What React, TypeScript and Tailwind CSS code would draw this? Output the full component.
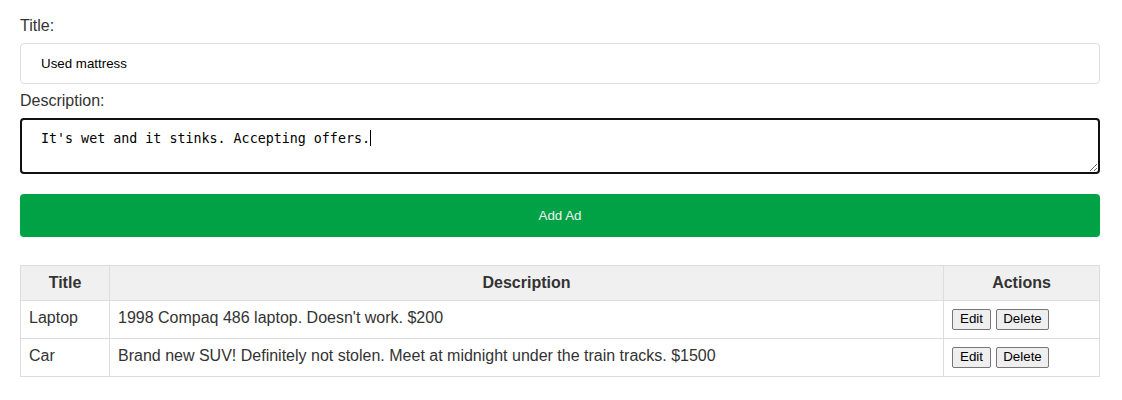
import React from "react";

const rows = [
  { title: "Laptop", desc: "1998 Compaq 486 laptop. Doesn't work. $200" },
  { title: "Car", desc: "Brand new SUV! Definitely not stolen. Meet at midnight under the train tracks. $1500" },
];

export default function App() {
  return (
    <div
      className="bg-white text-[#333] px-[20px] pt-[17px] w-[1122px] h-[400px]"
      style={{ fontFamily: '"Liberation Sans", Arial, sans-serif' }}
    >
      <div className="w-[1080px]">
        <label className="block text-[16px] leading-[18px] mb-[8px]">Title:</label>
        <input
          type="text"
          defaultValue="Used mattress"
          className="block w-full h-[41px] border border-[#ddd] rounded-[4px] px-[20px] text-[13.33px] text-black outline-none"
          style={{ fontFamily: '"Liberation Sans", Arial, sans-serif' }}
        />
        <label className="block text-[16px] leading-[18px] mt-[8px] mb-[8px]">Description:</label>
        <div className="relative">
          <textarea
            readOnly
            defaultValue="It's wet and it stinks. Accepting offers."
            className="block w-full h-[56px] border-2 border-[#101010] rounded-[4px] px-[19px] pt-[11px] pb-[7px] text-[13.33px] leading-[16px] text-black outline-none caret-transparent"
            style={{ fontFamily: '"DejaVu Sans Mono", monospace' }}
          />
          <span className="absolute left-[350px] top-[12px] w-px h-[16px] bg-black" />
        </div>
        <button className="block w-full h-[43px] mt-[20px] rounded-[4px] bg-[#00a246] text-[#f0f0f0] text-[13.33px]">
          Add Ad
        </button>
        <table className="mt-[28px] w-full border-collapse text-[16px]">
          <thead>
            <tr className="bg-[#f0f0f0]">
              <th className="border border-[#ddd] w-[89px] h-[35px] font-bold">Title</th>
              <th className="border border-[#ddd] w-[834px] h-[35px] font-bold">Description</th>
              <th className="border border-[#ddd] h-[35px] font-bold">Actions</th>
            </tr>
          </thead>
          <tbody>
            {rows.map((r) => (
              <tr key={r.title}>
                <td className="border border-[#ddd] h-[38px] px-[8px] pb-[3px] text-left">{r.title}</td>
                <td className="border border-[#ddd] h-[38px] px-[8px] pb-[3px] text-left">{r.desc}</td>
                <td className="border border-[#ddd] h-[38px] px-[8px] pb-[1px]">
                  <div className="flex gap-[5px]">
                    <button className="w-[39px] h-[21px] border border-[#767676] rounded-[2px] bg-[#efefef] text-black text-[13.33px] leading-[16px]">
                      Edit
                    </button>
                    <button className="w-[53px] h-[21px] border border-[#767676] rounded-[2px] bg-[#efefef] text-black text-[13.33px] leading-[16px]">
                      Delete
                    </button>
                  </div>
                </td>
              </tr>
            ))}
          </tbody>
        </table>
      </div>
    </div>
  );
}
